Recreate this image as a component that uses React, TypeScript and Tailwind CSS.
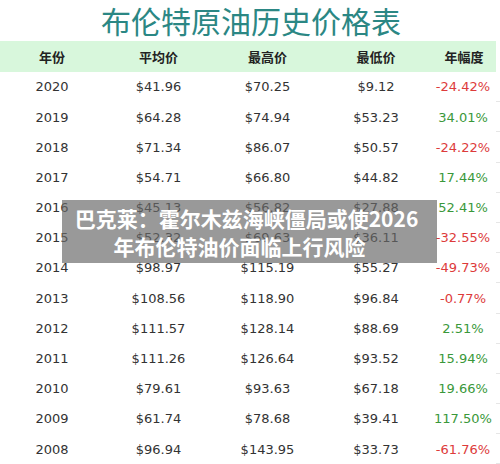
const rows: [string, string, string, string, string][] = [
  ['2020', '$41.96', '$70.25', '$9.12', '-24.42%'],
  ['2019', '$64.28', '$74.94', '$53.23', '34.01%'],
  ['2018', '$71.34', '$86.07', '$50.57', '-24.22%'],
  ['2017', '$54.71', '$66.80', '$44.82', '17.44%'],
  ['2016', '$45.13', '$56.82', '$27.88', '52.41%'],
  ['2015', '$52.32', '$69.63', '$36.11', '-32.55%'],
  ['2014', '$98.97', '$115.19', '$55.27', '-49.73%'],
  ['2013', '$108.56', '$118.90', '$96.84', '-0.77%'],
  ['2012', '$111.57', '$128.14', '$88.69', '2.51%'],
  ['2011', '$111.26', '$126.64', '$93.52', '15.94%'],
  ['2010', '$79.61', '$93.63', '$67.18', '19.66%'],
  ['2009', '$61.74', '$78.68', '$39.41', '117.50%'],
  ['2008', '$96.94', '$143.95', '$33.73', '-61.76%'],
];

const cols = 'grid grid-cols-[104px_109px_109px_108px_66px] w-[496px]';

export default function App() {
  return (
    <div className="relative w-[500px] h-[464px] overflow-hidden bg-white font-['DejaVu_Sans','Noto_Sans_CJK_SC',sans-serif]">
      {/* title */}
      <div className="h-[41px] text-center pl-[2px] text-[30px] leading-[40px] text-[#2b8784] font-['Noto_Sans_CJK_SC',sans-serif]">
        布伦特原油历史价格表
      </div>

      {/* header */}
      <div className="flex">
        <div className={`${cols} h-[31px] bg-[#d8f7dc] items-center text-center text-[13px] font-bold text-[#222] font-['Noto_Sans_CJK_SC',sans-serif]`}>
          <div>年份</div>
          <div>平均价</div>
          <div>最高价</div>
          <div>最低价</div>
          <div className="pl-[2px]">年幅度</div>
        </div>
      </div>

      {/* rows */}
      {rows.map((r) => {
        const down = r[4].startsWith('-');
        return (
          <div key={r[0]} className="flex h-[30.2px]">
            <div className={`${cols} items-center text-center text-[13px] text-[#333]`}>
              <div>{r[0]}</div>
              <div>{r[1]}</div>
              <div>{r[2]}</div>
              <div>{r[3]}</div>
              <div className={down ? 'text-[#dd3b3b]' : 'text-[#3a983a]'}>{r[4]}</div>
            </div>
            <div className="flex-1 border-b border-[#e6e6e6]" />
          </div>
        );
      })}

      {/* news banner over the table */}
      <div className="absolute left-[62px] top-[200px] w-[375px] h-[63px] bg-[rgba(105,105,105,0.68)] flex flex-col items-center justify-center text-white font-bold text-[21px] leading-[28px] font-['Noto_Sans_CJK_SC',sans-serif]">
        <span className="pr-[6px]">巴克莱：霍尔木兹海峡僵局或使2026</span>
        <span className="pr-[20px]">年布伦特油价面临上行风险</span>
      </div>
    </div>
  );
}
